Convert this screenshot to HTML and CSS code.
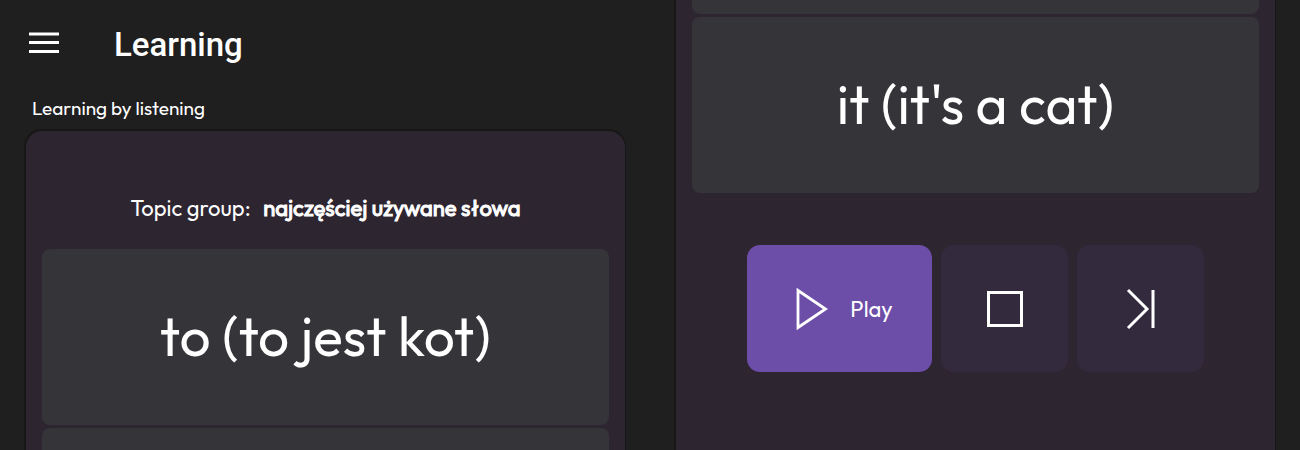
FILE: index.html
```html
<!DOCTYPE html>
<html lang="en">
<head>
    <meta charset="UTF-8">
    <meta name="viewport" content="width=device-width, initial-scale=1.0">
    <title>Learning</title>
    <link rel="stylesheet" href="styles.css">
</head>
<body>
    <div class="screens">
        <main class="screen">
            <header class="top-bar">
                <button class="menu-button" aria-label="Menu">
                    <svg width="30" height="22" viewBox="0 0 30 22">
                        <path d="M0 2h30M0 10.500h30M0 19.500h30" stroke="#fff" stroke-width="3.200"/>
                    </svg>
                </button>
                <h1>Learning</h1>
            </header>
            <h2>Learning by listening</h2>
            <section class="panel panel-start">
                <p class="topic">Topic group: <strong>najczęściej używane słowa</strong></p>
                <div class="word-card">to (to jest kot)</div>
                <div class="word-card card-cut-bottom"></div>
            </section>
        </main>
        <section class="screen">
            <div class="panel panel-end">
                <div class="word-card card-cut-top"></div>
                <div class="word-card">it (it's a cat)</div>
                <div class="controls">
                    <button class="control play-button">
                        <svg width="32" height="44" viewBox="0 0 32 44">
                            <path d="M2 3.500v37L29.500 22z" fill="none" stroke="#fff" stroke-width="2.800"/>
                        </svg>
                        <span>Play</span>
                    </button>
                    <button class="control" aria-label="Stop">
                        <svg width="36" height="36" viewBox="0 0 36 36">
                            <path d="M1.500 1.500h33v33h-33z" fill="none" stroke="#fff" stroke-width="3"/>
                        </svg>
                    </button>
                    <button class="control" aria-label="Next">
                        <svg width="30" height="42" viewBox="0 0 30 42">
                            <path d="M2 2l19 19L2 40M27 2v38" fill="none" stroke="#fff" stroke-width="3"/>
                        </svg>
                    </button>
                </div>
            </div>
        </section>
    </div>
</body>
</html>
```
FILE: styles.css
```css
* {
    box-sizing: border-box;
}
body {
    margin: 0;
    font-family: 'Outfit', 'Lato', sans-serif;
    background-color: #1f1f1f;
    color: #fff;
}
.screens {
    display: grid;
    grid-template-columns: 1fr 1fr;
    height: 100vh;
    overflow: hidden;
}
.screen {
    display: flex;
    flex-direction: column;
    min-width: 0;
    padding: 0 24px;
}
.top-bar {
    display: flex;
    align-items: center;
    gap: 55px;
    height: 88px;
    padding-left: 5px;
}
.menu-button {
    display: flex;
    padding: 0 0 3px;
    background: none;
    border: none;
    cursor: pointer;
}
h1 {
    margin: 0;
    font-family: 'Roboto', sans-serif;
    font-size: 33px;
    font-weight: 500;
}
h2 {
    margin: 0;
    padding-left: 8px;
    font-size: 19px;
    font-weight: 400;
    line-height: 41px;
}
.panel {
    display: flex;
    flex-direction: column;
    flex: 1;
    gap: 3px;
    padding: 0 16px;
    background-color: #2d2530;
    border: 2px solid #171717;
    border-right-width: 1px;
}
.panel-start {
    padding-top: 64px;
    border-bottom: none;
    border-radius: 18px 18px 0 0;
}
.panel-end {
    border-top: none;
    border-bottom: none;
}
.topic {
    margin: 0 0 24px;
    font-size: 22px;
    line-height: 27px;
    text-align: center;
}
.topic strong {
    margin-left: 8px;
    font-weight: 400;
    -webkit-text-stroke: 1px #fff;
}
.word-card {
    display: flex;
    flex-shrink: 0;
    align-items: center;
    justify-content: center;
    height: 176px;
    padding-bottom: 4px;
    background-color: #353439;
    border-radius: 8px;
    font-size: 55px;
}
.card-cut-top {
    height: 14px;
    border-radius: 0 0 8px 8px;
}
.card-cut-bottom {
    height: auto;
    flex: 1;
    border-radius: 8px 8px 0 0;
}
.controls {
    display: flex;
    justify-content: center;
    gap: 9px;
    margin-top: 49px;
}
.control {
    display: flex;
    align-items: center;
    justify-content: center;
    width: 127px;
    height: 127px;
    padding: 0;
    background-color: #342a3e;
    border: none;
    border-radius: 13px;
    color: #fff;
    font-family: inherit;
    font-size: 22px;
    cursor: pointer;
}
.play-button {
    gap: 22px;
    width: 185px;
    padding-left: 10px;
    background-color: #6c4da8;
}
```
